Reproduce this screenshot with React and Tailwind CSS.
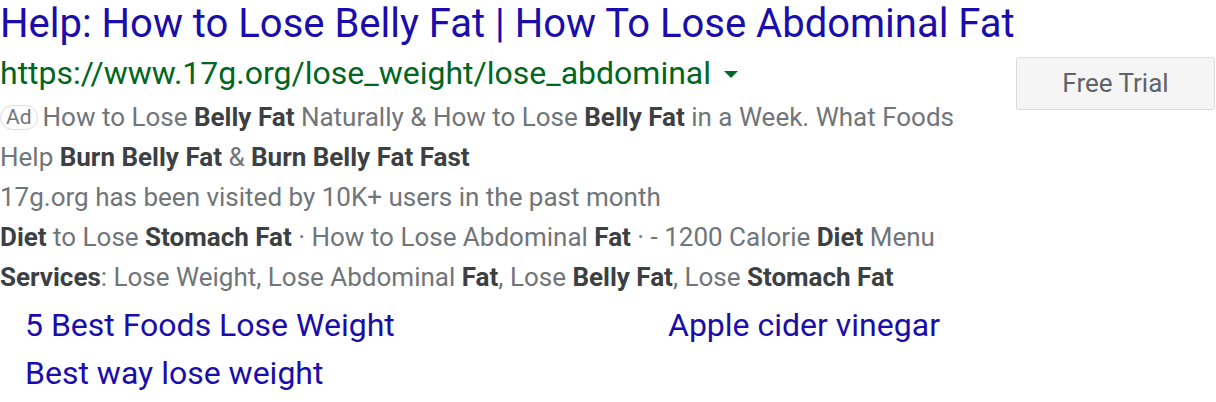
import React from 'react';

const Bold = ({ children }) => <b className="font-bold text-[#3c4043]">{children}</b>;

const App = () => {
  return (
    <div className="w-[1216px] h-[402px] bg-white overflow-hidden font-['Roboto',sans-serif]">
      {/* Title */}
      <div className="text-[40px] leading-[47px] text-[#1a0dab] whitespace-nowrap">
        Help: How to Lose Belly Fat | How To Lose Abdominal Fat
      </div>

      <div className="flex">
        <div className="flex-1">
          {/* URL */}
          <div className="flex items-center h-[50px] pt-[2px] text-[32px] text-[#006621] whitespace-nowrap">
            https://www.17g.org/lose_weight/lose_abdominal
            <span className="ml-[13px] mt-[2px] w-0 h-0 border-l-[7px] border-r-[7px] border-t-[7px] border-l-transparent border-r-transparent border-t-[#006621]"></span>
          </div>

          {/* Description */}
          <div className="text-[26px] leading-[40px] text-[#70757a]">
            <div className="whitespace-nowrap">
              <span className="inline-block align-middle mr-[5px] -mt-[4px] px-[5px] h-[25px] leading-[22px] text-[21px] text-[#70757a] border border-[#dadce0] rounded-[13px]">Ad</span>
              How to Lose <Bold>Belly Fat</Bold> Naturally &amp; How to Lose <Bold>Belly Fat</Bold> in a Week. What Foods
            </div>
            <div>
              Help <Bold>Burn Belly Fat</Bold> &amp; <Bold>Burn Belly Fat Fast</Bold>
            </div>
            <div>17g.org has been visited by 10K+ users in the past month</div>
            <div className="whitespace-nowrap">
              <Bold>Diet</Bold> to Lose <Bold>Stomach Fat</Bold> · How to Lose Abdominal <Bold>Fat</Bold> · - 1200 Calorie <Bold>Diet</Bold> Menu
            </div>
            <div className="whitespace-nowrap">
              <Bold>Services</Bold>: Lose Weight, Lose Abdominal <Bold>Fat</Bold>, Lose <Bold>Belly Fat</Bold>, Lose <Bold>Stomach Fat</Bold>
            </div>
          </div>
        </div>

        <div className="pt-[10px] pr-px">
          <button className="w-[199px] h-[53px] bg-[#f5f5f5] border border-[#dcdcdc] rounded-[3px] text-[26px] text-[#5f6368]">
            Free Trial
          </button>
        </div>
      </div>

      {/* Sitelinks */}
      <div className="grid grid-cols-[643px_1fr] pl-[25px] pt-[4px] text-[32px] leading-[48px] text-[#1a0dab]">
        <div>5 Best Foods Lose Weight</div>
        <div>Apple cider vinegar</div>
        <div>Best way lose weight</div>
      </div>
    </div>
  );
};

export default App;
